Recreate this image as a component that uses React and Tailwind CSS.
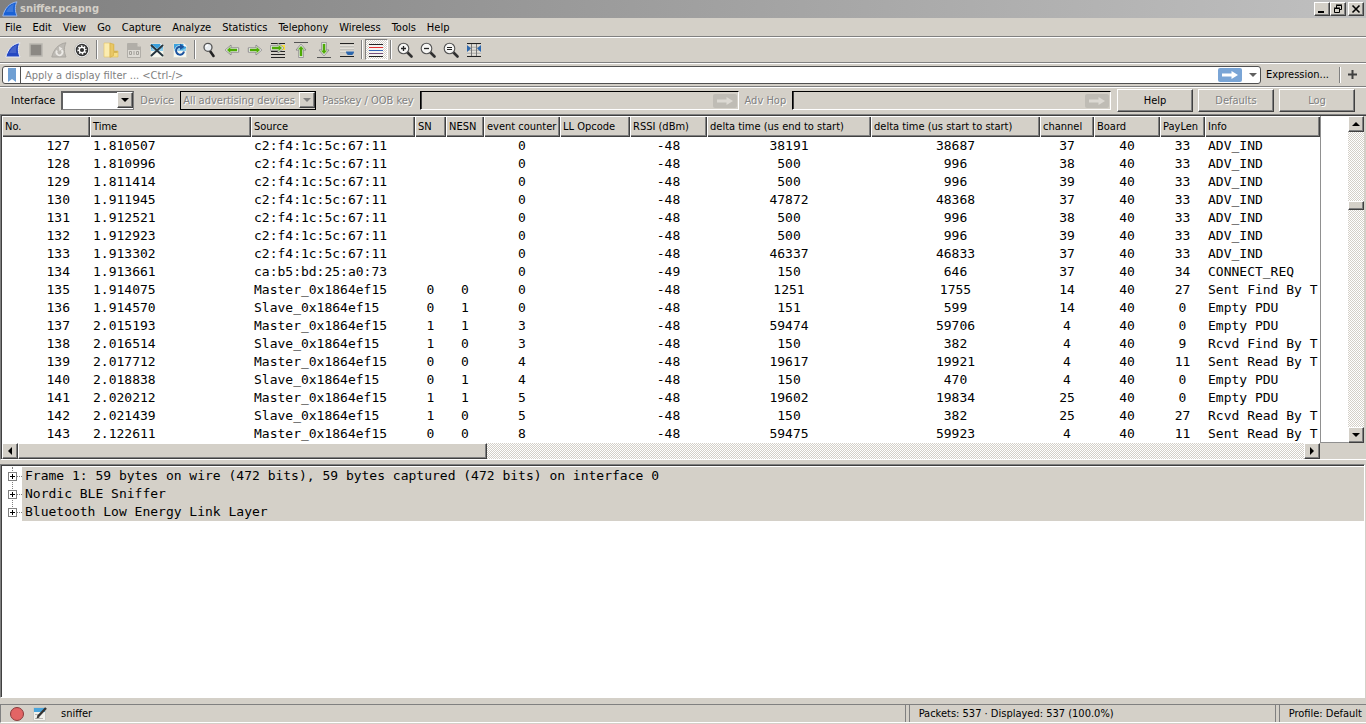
import React from "react";

const RAISED =
  "bg-[#d4d0c8] border border-t-white border-l-white border-r-[#404040] border-b-[#404040] shadow-[inset_-1px_-1px_0_#808080]";
const TRACK =
  "bg-[repeating-conic-gradient(#ffffff_0_25%,#d4d0c8_0_50%)] bg-[length:2px_2px]";
const MONO = "font-['DejaVu_Sans_Mono','Liberation_Mono',monospace] text-[13px] leading-[18px]";

const menus = ["File", "Edit", "View", "Go", "Capture", "Analyze", "Statistics", "Telephony", "Wireless", "Tools", "Help"];

const columns = [
  { label: "No.", width: "w-[88px]", cell: "text-right pr-[20px]" },
  { label: "Time", width: "w-[161px]", cell: "pl-[3px]" },
  { label: "Source", width: "w-[164px]", cell: "pl-[3px]" },
  { label: "SN", width: "w-[31px]", cell: "text-center" },
  { label: "NESN", width: "w-[38px]", cell: "text-center" },
  { label: "event counter", width: "w-[76px]", cell: "text-center" },
  { label: "LL Opcode", width: "w-[70px]", cell: "text-center" },
  { label: "RSSI (dBm)", width: "w-[77px]", cell: "text-center" },
  { label: "delta time (us end to start)", width: "w-[164px]", cell: "text-center" },
  { label: "delta time (us start to start)", width: "w-[169px]", cell: "text-center" },
  { label: "channel", width: "w-[54px]", cell: "text-center" },
  { label: "Board", width: "w-[66px]", cell: "text-center" },
  { label: "PayLen", width: "w-[45px]", cell: "text-center" },
  { label: "Info", width: "", cell: "pl-[3px]" },
];

const A = "c2:f4:1c:5c:67:11";
const M = "Master_0x1864ef15";
const S = "Slave_0x1864ef15";
const packets = [
  [127, "1.810507", A, "", "", 0, "", -48, 38191, 38687, 37, 40, 33, "ADV_IND"],
  [128, "1.810996", A, "", "", 0, "", -48, 500, 996, 38, 40, 33, "ADV_IND"],
  [129, "1.811414", A, "", "", 0, "", -48, 500, 996, 39, 40, 33, "ADV_IND"],
  [130, "1.911945", A, "", "", 0, "", -48, 47872, 48368, 37, 40, 33, "ADV_IND"],
  [131, "1.912521", A, "", "", 0, "", -48, 500, 996, 38, 40, 33, "ADV_IND"],
  [132, "1.912923", A, "", "", 0, "", -48, 500, 996, 39, 40, 33, "ADV_IND"],
  [133, "1.913302", A, "", "", 0, "", -48, 46337, 46833, 37, 40, 33, "ADV_IND"],
  [134, "1.913661", "ca:b5:bd:25:a0:73", "", "", 0, "", -49, 150, 646, 37, 40, 34, "CONNECT_REQ"],
  [135, "1.914075", M, 0, 0, 0, "", -48, 1251, 1755, 14, 40, 27, "Sent Find By T"],
  [136, "1.914570", S, 0, 1, 0, "", -48, 151, 599, 14, 40, 0, "Empty PDU"],
  [137, "2.015193", M, 1, 1, 3, "", -48, 59474, 59706, 4, 40, 0, "Empty PDU"],
  [138, "2.016514", S, 1, 0, 3, "", -48, 150, 382, 4, 40, 9, "Rcvd Find By T"],
  [139, "2.017712", M, 0, 0, 4, "", -48, 19617, 19921, 4, 40, 11, "Sent Read By T"],
  [140, "2.018838", S, 0, 1, 4, "", -48, 150, 470, 4, 40, 0, "Empty PDU"],
  [141, "2.020212", M, 1, 1, 5, "", -48, 19602, 19834, 25, 40, 0, "Empty PDU"],
  [142, "2.021439", S, 1, 0, 5, "", -48, 150, 382, 25, 40, 27, "Rcvd Read By T"],
  [143, "2.122611", M, 0, 0, 8, "", -48, 59475, 59923, 4, 40, 11, "Sent Read By T"],
];

const details = [
  "Frame 1: 59 bytes on wire (472 bits), 59 bytes captured (472 bits) on interface 0",
  "Nordic BLE Sniffer",
  "Bluetooth Low Energy Link Layer",
];

function Svg({ children, size = 16, className = "" }) {
  return (
    <svg width={size} height={size} viewBox={`0 0 ${size} ${size}`} className={`shrink-0 ${className}`} aria-hidden="true">
      {children}
    </svg>
  );
}

function Fin({ outline = "#eceef4", fill = "#2448c2" }) {
  return (
    <>
      <path d="M.8 15C2.500 8 7 1.800 15 .8c-2.200 4-2.200 9.200 0 14.200z" fill={fill} stroke={outline} strokeWidth="1" />
      <path d="M4 11C6 7 8 4.500 12 3c-1 2.500-1 5-.6 8z" fill="#fff" opacity=".15" />
    </>
  );
}

function GreenArrow({ rotate = 0 }) {
  return (
    <g transform={`rotate(${rotate} 8 8)`}>
      <path d="M1.200 8L7 3v2.800h7.700v4.400H7V13z" fill="#fff" stroke="#8c8c8c" strokeLinejoin="round" />
      <path d="M3.200 8L6.200 5.300V7h6.800v2H6.200v1.700z" fill="#4eaa06" stroke="#4eaa06" strokeWidth=".5" />
    </g>
  );
}

function Lens({ children }) {
  return (
    <>
      <path d="M10.500 10.500l4 4" stroke="#303030" strokeWidth="2.600" strokeLinecap="round" />
      <circle cx="6.500" cy="6.500" r="5.300" fill="#f6f6f4" stroke="#555" strokeWidth="1.100" />
      {children}
    </>
  );
}

function Page({ blue = true }) {
  return (
    <>
      <path d="M1.500 1.500h10l3 3v11h-13z" fill={blue ? "#f7f8ee" : "#c4c1bb"} stroke={blue ? "#dcdcd2" : "#b1aea8"} />
      <path d="M2 2h9.500l2.500 2.500V8H2z" fill={blue ? "#3aa0dc" : "#b1aea8"} />
      {blue && <path d="M2 7l4-2 4 3 4-2v3H2z" fill="#8fd0ee" />}
      <path d="M11.500 1v3.500H15z" fill={blue ? "#fff" : "#d4d0c8"} />
    </>
  );
}

const tools = [
  { name: "Start capture", art: <Fin /> },
  { name: "Stop capture", art: <rect x="2" y="2" width="12" height="12" fill="#8b8883" stroke="#b9b6b0" strokeWidth="1.500" /> },
  {
    name: "Restart capture",
    art: (
      <>
        <path d="M.8 15C2.500 8 7 1.800 15 .8c-2.200 4-2.200 9.200 0 14.200z" fill="#bdbab4" stroke="#aaa7a1" />
        <path d="M6 8.500a3 3 0 1 0 4.500-.5" fill="none" stroke="#eceae6" strokeWidth="1.800" />
        <path d="M8 4.500l3.500 2-3 2.500z" fill="#eceae6" />
      </>
    ),
  },
  {
    name: "Capture options",
    art: (
      <>
        <circle cx="8" cy="8" r="7.400" fill="#fff" stroke="#a5a29d" strokeWidth=".6" />
        <circle cx="8" cy="8" r="5.500" fill="none" stroke="#333" strokeWidth="1.500" />
        <circle cx="8" cy="8" r="4.200" fill="none" stroke="#333" strokeWidth="1.600" strokeDasharray="1.700 1.600" />
        <circle cx="8" cy="8" r="2.100" fill="#333" />
      </>
    ),
  },
  null,
  {
    name: "Open",
    art: (
      <>
        <path d="M8 2h3v7h4v6H8z" fill="#f6dd85" stroke="#dfbd55" strokeWidth=".6" />
        <path d="M1 1h6v14H1z" fill="#fbecb0" stroke="#e2c467" strokeWidth=".6" />
        <path d="M7 1l3.500 1.500v11L7 15.500z" fill="#e8c765" stroke="#d3ac43" strokeWidth=".6" />
        <path d="M11 10h3.500" stroke="#b58f2d" />
      </>
    ),
  },
  {
    name: "Save",
    art: (
      <>
        <Page blue={false} />
        <path d="M2 8h12v7H2z" fill="#dedbd5" />
        <path d="M3.500 9.500h2v3h-2zM8 9v4M10.500 9.500h2v3h-2z" fill="none" stroke="#a3a09a" />
      </>
    ),
  },
  {
    name: "Close file",
    art: (
      <>
        <Page />
        <path d="M3 4l10 9.500M13 4L3 13.500" stroke="#fff" strokeWidth="3" opacity=".5" />
        <path d="M2.500 3.500l11 10M13.500 3.500l-11 10" stroke="#26363f" strokeWidth="2" strokeLinecap="round" />
      </>
    ),
  },
  {
    name: "Reload file",
    art: (
      <>
        <Page />
        <path d="M11.800 10A4 4 0 1 1 9 4.800" fill="none" stroke="#fff" strokeWidth="3.400" opacity=".6" />
        <path d="M12 9.500A4 4 0 1 1 9 4.800" fill="none" stroke="#1d559f" strokeWidth="2" />
        <path d="M8 1.800l4.500 3L8 8z" fill="#1d559f" />
      </>
    ),
  },
  null,
  {
    name: "Find packet",
    art: (
      <>
        <path d="M9 9l3.500 5" stroke="#222" strokeWidth="2.600" strokeLinecap="round" />
        <circle cx="7" cy="5.300" r="4" fill="#e9edf0" stroke="#555" strokeWidth="1.300" />
        <path d="M5 5a2.500 2.500 0 0 1 2-2" fill="none" stroke="#fff" strokeWidth="1.300" />
      </>
    ),
  },
  { name: "Previous packet", art: <GreenArrow /> },
  { name: "Next packet", art: <GreenArrow rotate={180} /> },
  {
    name: "Go to packet",
    art: (
      <>
        <path d="M1 1.500h14M1 9.500h14M1 12.500h14M1 15.500h14" stroke="#222" />
        <rect x="10" y="3" width="5" height="5" fill="#f8e13c" />
        <g transform="translate(-1 -2)">
          <GreenArrow rotate={180} />
        </g>
      </>
    ),
  },
  { name: "First packet", art: <><path d="M1 .5h14" stroke="#555" /><g transform="translate(0 1)"><GreenArrow rotate={90} /></g></> },
  { name: "Last packet", art: <><path d="M1 15.500h14" stroke="#555" /><g transform="translate(0 -1)"><GreenArrow rotate={-90} /></g></> },
  {
    name: "Auto scroll",
    art: (
      <>
        <path d="M1 1.500h14M1 14.500h14" stroke="#222" />
        <path d="M1 4.500h14M1 7.500h14M1 10.500h14" stroke="#c2c1bc" />
        <path d="M1 3.500h14M1 6.500h14M1 9.500h14" stroke="#e2e0da" />
        <path d="M7 9.500h8c0 2-1 3-2 3.500h-4c-1-.5-2-1.500-2-3.500z" fill="#2d67ad" />
      </>
    ),
  },
  null,
  {
    name: "Colorize",
    pressed: true,
    art: (
      <>
        <path d="M1 2h14v13H1z" fill="#f4f3f0" />
        <path d="M1 2.500h14M1 14.500h14" stroke="#222" />
        <path d="M1 5.500h14" stroke="#e33030" />
        <path d="M1 8.500h14" stroke="#3465b4" />
        <path d="M1 11.500h14" stroke="#75507b" />
      </>
    ),
  },
  null,
  { name: "Zoom in", art: <Lens><path d="M4 6.500h5M6.500 4v5" stroke="#222" strokeWidth="1.300" /></Lens> },
  { name: "Zoom out", art: <Lens><path d="M4 6.500h5" stroke="#222" strokeWidth="1.300" /></Lens> },
  { name: "Normal size", art: <Lens><path d="M4 5.500h5M4 7.500h5" stroke="#222" /></Lens> },
  {
    name: "Resize columns",
    art: (
      <>
        <path d="M1 1.500h14M1 14.500h14" stroke="#222" />
        <path d="M1 3.500h14M1 6.500h14M1 9.500h14M1 12.500h14" stroke="#e2e0da" />
        <path d="M1 5.500h14M1 8.500h14M1 11.500h14" stroke="#b9b8b3" />
        <path d="M5.500 2v12M10.500 2v12" stroke="#777" />
        <path d="M1 3l4 3.500L1 10zM15 3l-4 3.500 4 3.500z" fill="#2d67ad" />
      </>
    ),
  },
];

function Separator() {
  return <span className="mx-[2px] h-[19px] w-[2px] shrink-0 border-l border-r border-l-[#808080] border-r-white" />;
}

function Triangle({ dir, color = "#000000" }) {
  const paths = { up: "M0 6L4 2l4 4z", down: "M0 2h8L4 6z", left: "M6 0v8L2 4z", right: "M2 0v8l4-4z" };
  return (
    <Svg size={8}>
      <path d={paths[dir]} fill={color} />
    </Svg>
  );
}

function ScrollButton({ dir, label }) {
  return (
    <button type="button" aria-label={label} className={`flex size-[16px] shrink-0 items-center justify-center ${RAISED}`}>
      <Triangle dir={dir} />
    </button>
  );
}

function Combo({ id, value, disabled, width }) {
  return (
    <div className={`relative h-[19px] ${width}`}>
      <select
        id={id}
        disabled={disabled}
        className={`h-full w-full appearance-none border pl-[2px] opacity-100 outline-none ${
          disabled
            ? "border-t-black border-l-black border-r-black border-b-black bg-[#d4d0c8] text-[#808080] [text-shadow:1px_1px_0_#fff]"
            : "border-t-2 border-l-2 border-t-[#606060] border-l-[#606060] border-r-[#808080] border-b-[#808080] bg-white"
        }`}
      >
        <option>{value}</option>
      </select>
      <span className={`pointer-events-none absolute top-[1px] right-[1px] flex h-[16px] w-[16px] items-center justify-center ${RAISED}`}>
        <Triangle dir="down" color={disabled ? "#808080" : "#000000"} />
      </span>
    </div>
  );
}

function ArrowGlyph() {
  return (
    <svg width="16" height="10" viewBox="0 0 16 10" aria-hidden="true">
      <path d="M0 3.500h9.500V1L16 5l-6.500 4V6.500H0z" fill="currentColor" />
    </svg>
  );
}

function DisabledField({ id }) {
  return (
    <div className="flex h-[19px] min-w-0 flex-1 items-center border border-t-black border-l-black border-r-white border-b-white shadow-[inset_1px_0_0_#404040]">
      <input id={id} disabled className="h-full min-w-0 flex-1 bg-transparent px-1 outline-none" />
      <button type="button" disabled aria-label="Apply" className="mr-[1px] flex h-[14px] w-[24px] items-center justify-center rounded-[2px] bg-[#bfbcb5] text-[#dcd9d3]">
        <ArrowGlyph />
      </button>
    </div>
  );
}

function PushButton({ children, disabled }) {
  return (
    <button
      type="button"
      disabled={disabled}
      className={`h-[23px] w-[76px] shrink-0 ${RAISED} ${disabled ? "text-[#808080] [text-shadow:1px_1px_0_#fff]" : ""}`}
    >
      {children}
    </button>
  );
}

const BAR = "flex shrink-0 items-center border-b border-b-[#808080] shadow-[0_1px_0_#fff]";
const DIM = "text-[#808080] [text-shadow:1px_1px_0_#fff] whitespace-nowrap";

export default function App() {
  return (
    <div className="flex min-h-screen flex-col overflow-hidden bg-[#d4d0c8] font-['DejaVu_Sans_Condensed','DejaVu_Sans',sans-serif] text-[11px] leading-[14px] text-black">
      <header className="flex h-[18px] shrink-0 items-center bg-linear-to-r from-[#808080] to-[#c0c0c0] pr-[2px] pl-[2px]">
        <Svg>
          <Fin outline="#9db7e8" fill="#1a62d6" />
        </Svg>
        <h1 className="ml-[2px] flex-1 font-bold text-[#d4d0c8]">sniffer.pcapng</h1>
        <button type="button" aria-label="Minimize" className={`flex h-[14px] w-[16px] items-center justify-center ${RAISED}`}>
          <Svg size={10}><path d="M1 8h6" stroke="#000" strokeWidth="2" /></Svg>
        </button>
        <button type="button" aria-label="Restore" className={`flex h-[14px] w-[16px] items-center justify-center ${RAISED}`}>
          <Svg size={10}>
            <path d="M3.500 4V1.500h5v4H7M3 1h6M1.500 4.500h5v4h-5zM1 4h6" fill="none" stroke="#000" />
          </Svg>
        </button>
        <button type="button" aria-label="Close" className={`ml-[2px] flex h-[14px] w-[16px] items-center justify-center ${RAISED}`}>
          <Svg size={10}><path d="M1.500 1.500l7 7M8.500 1.500l-7 7" stroke="#000" strokeWidth="1.600" /></Svg>
        </button>
      </header>

      <nav className={`h-[19px] gap-[11px] pt-[2px] pl-[5px] ${BAR}`}>
        {menus.map((m) => (
          <button key={m} type="button">{m}</button>
        ))}
      </nav>

      <div role="toolbar" className={`h-[26px] pl-[2px] ${BAR}`}>
        {tools.map((t, i) =>
          t ? (
            <button
              key={t.name}
              type="button"
              aria-label={t.name}
              className={`flex h-[21px] w-[23px] shrink-0 ${
                t.pressed
                  ? `border border-t-[#808080] border-l-[#808080] border-r-white border-b-white pt-[2px] pl-[2px] ${TRACK}`
                  : "pt-[3px] pl-[3px]"
              }`}
            >
              <Svg>{t.art}</Svg>
            </button>
          ) : (
            <Separator key={i} />
          )
        )}
      </div>

      <div className={`h-[24px] pr-[9px] pl-[2px] ${BAR}`}>
        <div className="flex h-[18px] min-w-0 flex-1 items-center rounded-[3px] border border-[#505050] bg-white">
          <button type="button" aria-label="Bookmarks" className="flex h-full w-[18px] items-center justify-center border-r border-[#505050]">
            <Svg size={14}><path d="M3 0h8v14l-4-3-4 3z" fill="#6f9fd3" /></Svg>
          </button>
          <input
            aria-label="Display filter"
            placeholder="Apply a display filter ... <Ctrl-/>"
            className="h-full min-w-0 flex-1 bg-transparent pt-[2px] pl-[4px] outline-none placeholder:text-[#808080]"
          />
          <button type="button" aria-label="Apply filter" className="flex h-[14px] w-[24px] items-center justify-center rounded-[2px] bg-[#7aa5d6] text-white">
            <ArrowGlyph />
          </button>
          <button type="button" aria-label="Recent filters" className="flex w-[18px] justify-center pl-[4px]">
            <Triangle dir="down" color="#606060" />
          </button>
        </div>
        <button type="button" className="mx-[5px]">Expression...</button>
        <span className="mx-[5px] h-[16px] w-[2px] border-l border-r border-l-[#808080] border-r-white" />
        <button type="button" aria-label="Add filter button" className="ml-[2px]">
          <Svg size={9}><path d="M0 4.500h9M4.500 0v9" stroke="#404040" strokeWidth="2" /></Svg>
        </button>
      </div>

      <form className="flex h-[27px] shrink-0 items-center gap-[6px] pr-[11px] pl-[11px]">
        <label htmlFor="iface">Interface</label>
        <Combo id="iface" value="" width="w-[73px]" />
        <label htmlFor="device" className={DIM}>Device</label>
        <Combo id="device" value="All advertising devices" disabled width="w-[136px]" />
        <label htmlFor="passkey" className={DIM}>Passkey / OOB key</label>
        <DisabledField id="passkey" />
        <label htmlFor="hop" className={DIM}>Adv Hop</label>
        <DisabledField id="hop" />
        <div className="flex gap-[5px]">
          <PushButton>Help</PushButton>
          <PushButton disabled>Defaults</PushButton>
          <PushButton disabled>Log</PushButton>
        </div>
      </form>

      <section className="flex shrink-0 flex-col border-t border-b border-l border-t-[#808080] border-b-white border-l-[#808080] pr-[2px] shadow-[inset_1px_1px_0_#404040]">
        <div className="mt-[1px] ml-[1px] flex">
          <div className="min-w-0 flex-1">
            <div className="overflow-hidden bg-white">
              <table className="w-full table-fixed border-collapse">
                <thead>
                  <tr className="h-[21px]">
                    {columns.map((c) => (
                      <th
                        key={c.label}
                        scope="col"
                        className={`overflow-hidden bg-[#d4d0c8] p-0 pt-[1px] pl-[3px] text-left font-normal whitespace-nowrap shadow-[inset_1px_1px_0_#fff,inset_-1px_-1px_0_#404040,inset_-2px_-2px_0_#808080] ${c.width}`}
                      >
                        {c.label}
                      </th>
                    ))}
                  </tr>
                </thead>
                <tbody className={MONO}>
                  {packets.map((p) => (
                    <tr key={p[0]} className="h-[18px]">
                      {p.map((v, i) => (
                        <td key={columns[i].label} className={`p-0 whitespace-nowrap ${columns[i].cell}`}>
                          {v}
                        </td>
                      ))}
                    </tr>
                  ))}
                </tbody>
              </table>
            </div>
            <div className={`flex h-[16px] justify-between ${TRACK}`}>
              <div className="flex flex-1">
                <ScrollButton dir="left" label="Scroll left" />
                <div className={`h-full w-[36%] ${RAISED}`} />
              </div>
              <ScrollButton dir="right" label="Scroll right" />
            </div>
          </div>
          <div className="mb-[16px] w-[28px] border-b border-l border-[#909090] bg-white" />
          <div className={`mb-[16px] flex w-[16px] flex-col ${TRACK}`}>
            <ScrollButton dir="up" label="Scroll up" />
            <div className="flex-1 pt-[69px]">
              <div className={`h-[9px] w-full ${RAISED}`} />
            </div>
            <ScrollButton dir="down" label="Scroll down" />
          </div>
        </div>
      </section>

      <section className="mt-[4px] mr-[1px] flex flex-1 flex-col border border-t-[#808080] border-r-white border-b-white border-l-[#808080] bg-white pt-[2px] pl-[1px] shadow-[inset_1px_1px_0_#404040]">
        <ul className={`relative ${MONO}`}>
          <li aria-hidden="true" className="absolute top-0 left-[10px] h-[46px] border-l border-dotted border-[#808080]" />
          {details.map((d) => (
            <li key={d} className="relative flex h-[18px] items-center pl-[6px]">
              <button type="button" aria-label={`Expand ${d}`} className="flex size-[9px] shrink-0 items-center justify-center border border-[#808080] bg-white">
                <Svg size={7}><path d="M1 3.500h5M3.500 1v5" stroke="#000" /></Svg>
              </button>
              <span className="w-[5px] shrink-0 border-t border-dotted border-[#808080]" />
              <span className="h-full flex-1 bg-[#d4d0c8] pl-[3px] whitespace-nowrap">{d}</span>
            </li>
          ))}
        </ul>
      </section>

      <footer className="mt-[6px] mb-[1px] flex h-[19px] shrink-0 items-center border-t border-b border-l border-t-[#808080] border-b-white border-l-[#808080]">
        <div className="flex min-w-0 flex-1 items-center pl-[8px]">
          <button type="button" aria-label="Expert information">
            <Svg><circle cx="8" cy="8" r="6.500" fill="#e26565" stroke="#8a3a3a" /></Svg>
          </button>
          <button type="button" aria-label="Capture comment" className="ml-[7px]">
            <Svg>
              <path d="M1.500 1.500h12v13h-12z" fill="#f0f0ec" stroke="#c8c8c2" />
              <path d="M2 2h11v4H2z" fill="#4aa5dc" />
              <path d="M3 8.500h5M3 12.500h8" stroke="#b5b5b0" />
              <path d="M6 10.500l8-8.500" stroke="#333" strokeWidth="2.400" />
              <path d="M4.500 12.500l1-3 2 2z" fill="#333" />
            </Svg>
          </button>
          <span className="ml-[13px]">sniffer</span>
        </div>
        <div className="flex h-full w-[370px] items-center border-l border-[#808080] p-0">
          <span className="ml-[3px] flex h-full items-center border-l border-[#808080] pl-[9px]">Packets: 537 · Displayed: 537 (100.0%)</span>
        </div>
        <div className="flex h-full items-center border-l border-[#808080]">
          <span className="ml-[3px] flex h-full items-center border-l border-[#808080] pr-[4px] pl-[9px] whitespace-nowrap">Profile: Default</span>
        </div>
      </footer>
    </div>
  );
}
